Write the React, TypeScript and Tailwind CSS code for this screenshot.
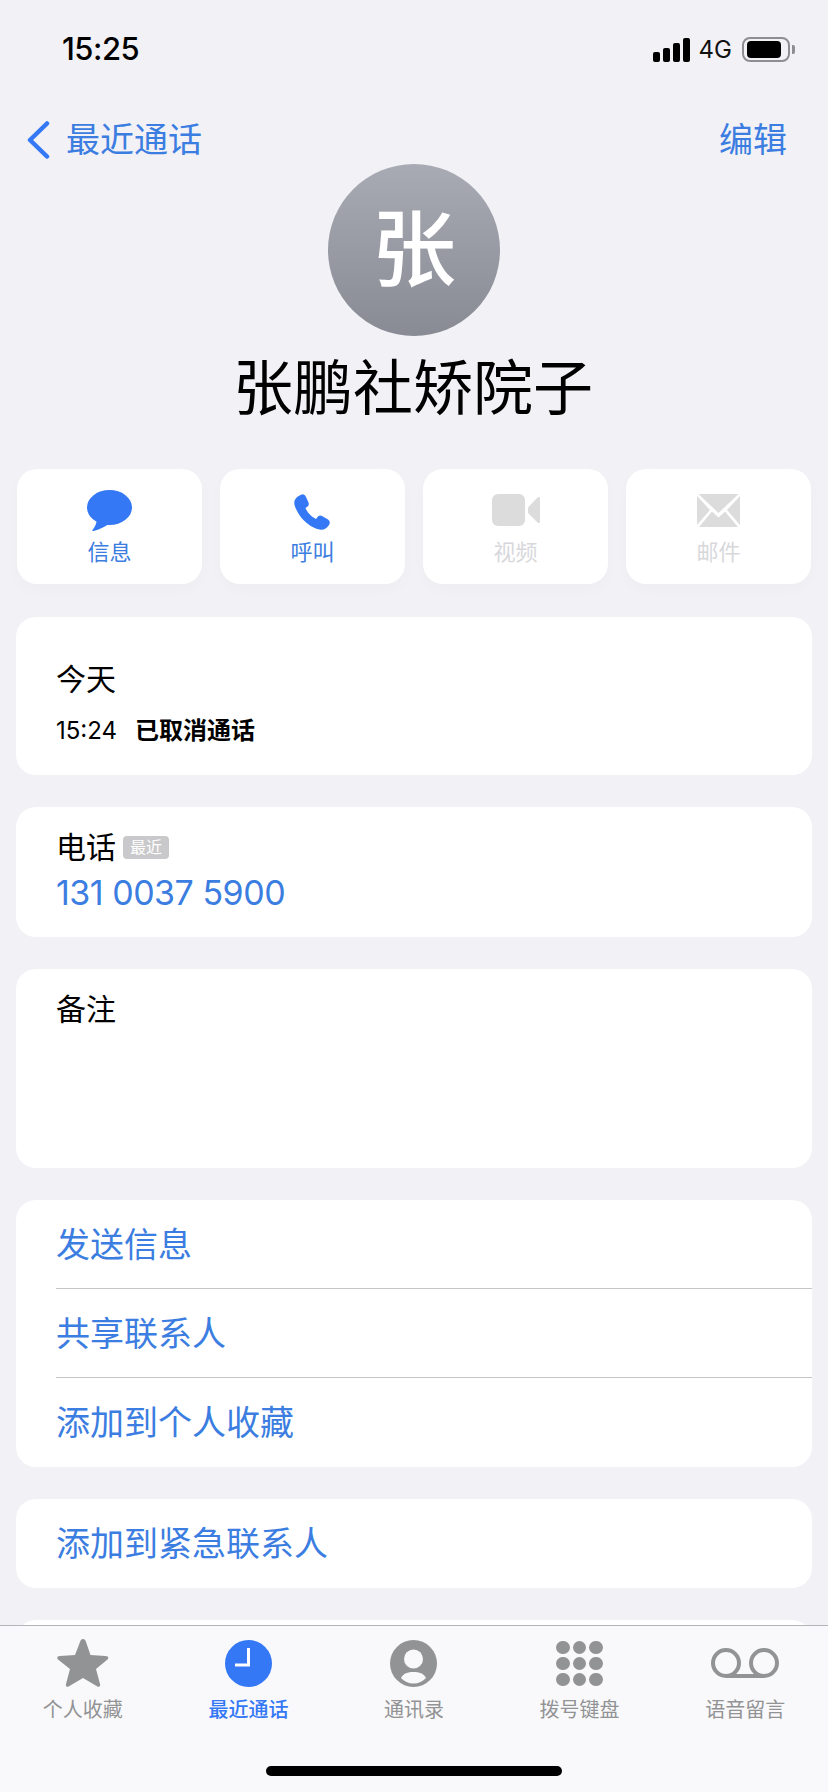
const BLUE_TEXT = 'text-[#3b7de0]';

const StatusBar = () => (
  <div className="flex h-[120px] items-start justify-between pl-[62px] pr-[33px] pt-[30px]">
    <span className="text-[31px] leading-[38px] font-medium tracking-[-0.5px] text-black">15:25</span>
    <div className="mt-[7px] flex items-center">
      <div className="flex h-[24px] items-end gap-[3px]">
        <span className="h-[10px] w-[7px] rounded-[2px] bg-black" />
        <span className="h-[14px] w-[7px] rounded-[2px] bg-black" />
        <span className="h-[19px] w-[7px] rounded-[2px] bg-black" />
        <span className="h-[24px] w-[7px] rounded-[2px] bg-black" />
      </div>
      <span className="ml-[9px] text-[24px] leading-[24px] text-[#111]">4G</span>
      <div className="ml-[10px] flex h-[25px] w-[48px] items-center rounded-[8px] border-2 border-[#8e8e93] pl-[3px]">
        <span className="h-[17px] w-[34px] rounded-[4px] bg-black" />
      </div>
      <span className="ml-[2px] h-[9px] w-[3px] rounded-r-[2px] bg-[#8e8e93]" />
    </div>
  </div>
);

const NavBar = () => (
  <div className={`flex h-[44px] items-start justify-between pl-[26px] pr-[41px] ${BLUE_TEXT}`}>
    <div className="flex h-[40px] items-center gap-[16px]">
      <svg width="24" height="38" viewBox="0 0 24 38" fill="none">
        <path d="M21 2.500 4 19l17 16.500" stroke="#3478f6" strokeWidth="4.500" strokeLinecap="round" strokeLinejoin="round" />
      </svg>
      <span className="text-[34px] leading-[40px]">最近通话</span>
    </div>
    <span className="text-[34px] leading-[40px]">编辑</span>
  </div>
);

const MessageIcon = () => (
  <svg width="45" height="41" viewBox="0 0 45 41" fill="#3478f6">
    <ellipse cx="22.500" cy="17.500" rx="22.500" ry="17.500" />
    <path d="M10 28c0 5-2 9-4.500 12-.5.800 0 1.300 1 1 6-1.500 11-4 15-7z" />
  </svg>
);

const PhoneIcon = () => (
  <svg width="36" height="36" viewBox="0 0 36 36" fill="#3478f6" className="-ml-[2px] mt-[3px]">
    <path d="M8 .5C9.500 0 11 1 12 3l2.500 5.500c.5 1.500.3 3-1 4L11.500 14c1.500 4 6 9 10.500 11l2-2.500c1-1 2.500-1.500 4-.5l6 3.500c2 1.500 2.300 3.500 1 5.500-2 3-5 5-8 4.800-7-.8-14-5.800-19-11.300C3.500 19 0 12 .3 8 .6 5 4 1.500 8 .5z" />
  </svg>
);

const VideoIcon = () => (
  <svg width="48" height="32" viewBox="0 0 48 32" fill="#dcdcdc">
    <rect x="0" y="0" width="33" height="32" rx="6" />
    <path d="M36 13.500 45.500 3.500c1-1 2.500-.5 2.500 1v23c0 1.500-1.500 2-2.500 1L36 19z" />
  </svg>
);

const MailIcon = () => (
  <svg width="43" height="33" viewBox="0 0 43 33" fill="#dcdcdc">
    <path d="M1.500 0h40L21.500 19z" />
    <path d="M0 2v29l13-15z" />
    <path d="M43 2v29L30 16z" />
    <path d="M2 33h39L28 17.500l-6.500 6-6.500-6z" />
  </svg>
);

const actions = [
  { label: '信息', icon: <MessageIcon />, color: BLUE_TEXT },
  { label: '呼叫', icon: <PhoneIcon />, color: BLUE_TEXT },
  { label: '视频', icon: <VideoIcon />, color: 'text-[#d8d8dc]' },
  { label: '邮件', icon: <MailIcon />, color: 'text-[#d8d8dc]' },
];

const Card = ({ className, children }: { className: string; children?: React.ReactNode }) => (
  <div className={`rounded-[20px] bg-white ${className}`}>{children}</div>
);

const StarIcon = () => (
  <svg width="52" height="50" viewBox="0 0 52 50" fill="#929394">
    <path d="M26 1c1.500 0 2.500 1 3 3l4.500 13 15 1c3 .2 3.500 2 2 3.500L39 31l4 15c.6 2.500-1 3.600-3 2.300L26 40l-14 8.300c-2 1.300-3.600.2-3-2.300l4-15L1 21.500C-.5 20 0 18.200 3 18l15-1 5-13c.5-2 1.500-3 3-3z" />
  </svg>
);

const ClockIcon = () => (
  <svg width="47" height="47" viewBox="0 0 47 47">
    <circle cx="23.500" cy="23.500" r="23.500" fill="#3478f6" />
    <path d="M23.500 8v17H10" fill="none" stroke="#fff" strokeWidth="3" />
  </svg>
);

const PersonIcon = () => (
  <svg width="47" height="47" viewBox="0 0 47 47">
    <circle cx="23.500" cy="23.500" r="23.500" fill="#929394" />
    <circle cx="23.500" cy="19" r="9.500" fill="#f9f9fb" />
    <path d="M11 38c2-4.500 7-6 12.500-6S34 33.500 36 38c-3 3.500-7.500 5.500-12.500 5.500S14 41.500 11 38z" fill="#f9f9fb" />
  </svg>
);

const KeypadIcon = () => (
  <div className="grid w-[47px] grid-cols-3 gap-[3px]">
    {[0, 1, 2, 3, 4, 5, 6, 7, 8].map((i) => (
      <span key={i} className="h-[13px] w-[13.600px] rounded-full bg-[#929394]" />
    ))}
  </div>
);

const VoicemailIcon = () => (
  <svg width="68" height="32" viewBox="0 0 68 32" fill="none" stroke="#929394" strokeWidth="4">
    <circle cx="15" cy="16" r="13" />
    <circle cx="53" cy="16" r="13" />
    <path d="M15 29h38" />
  </svg>
);

const tabs = [
  { label: '个人收藏', icon: <StarIcon />, color: 'text-[#929394]' },
  { label: '最近通话', icon: <ClockIcon />, color: 'text-[#3478f6] font-medium' },
  { label: '通讯录', icon: <PersonIcon />, color: 'text-[#929394]' },
  { label: '拨号键盘', icon: <KeypadIcon />, color: 'text-[#929394]' },
  { label: '语音留言', icon: <VoicemailIcon />, color: 'text-[#929394]' },
];

const TabBar = () => (
  <div className="absolute inset-x-0 bottom-0 h-[167px] border-t border-[#b4b4b8] bg-[#f9f9fb]">
    <div className="grid grid-cols-5 pt-[12px]">
      {tabs.map((t) => (
        <div key={t.label} className="flex flex-col items-center">
          <div className="flex h-[50px] items-center justify-center">{t.icon}</div>
          <span className={`mt-[9px] text-[20px] leading-[26px] ${t.color}`}>{t.label}</span>
        </div>
      ))}
    </div>
    <div className="absolute bottom-[16px] left-[266px] h-[10px] w-[296px] rounded-full bg-black" />
  </div>
);

export default function App() {
  return (
    <div className="relative h-[1792px] w-[828px] overflow-hidden bg-[#f1f1f6] font-['Inter','Noto_Sans_CJK_SC',sans-serif]">
      <StatusBar />
      <NavBar />

      <div className="flex flex-col items-center">
        <div className="flex h-[172px] w-[172px] items-center justify-center rounded-full bg-gradient-to-b from-[#a9abb4] to-[#888a94] text-[84px] leading-none font-medium text-white">
          张
        </div>
        <h1 className="mt-[16px] -ml-[2px] text-[60px] leading-[72px] font-normal text-black">张鹏社矫院子</h1>
      </div>

      <div className="mx-[17px] mt-[45px] grid grid-cols-4 gap-[18px]">
        {actions.map((a) => (
          <div
            key={a.label}
            className="flex h-[115px] flex-col items-center rounded-[20px] bg-white pt-[19px] shadow-[0_6px_16px_rgba(0,0,0,0.02)]"
          >
            <div className="flex h-[44px] items-center justify-center">{a.icon}</div>
            <span className={`mt-[6px] text-[22px] leading-[28px] ${a.color}`}>{a.label}</span>
          </div>
        ))}
      </div>

      <div className="mx-[16px] mt-[33px] flex flex-col gap-[32px]">
        <Card className="h-[158px] pl-[40px] pt-[44px]">
          <div className="text-[30px] leading-[36px] text-black">今天</div>
          <div className="mt-[18px] flex items-center gap-[18px] text-black">
            <span className="text-[24px] leading-[32px]">15:24</span>
            <span className="text-[24px] leading-[32px] font-bold">已取消通话</span>
          </div>
        </Card>

        <Card className="h-[130px] pl-[40px] pt-[22px]">
          <div className="flex items-center gap-[7px]">
            <span className="text-[30px] leading-[36px] text-black">电话</span>
            <span className="rounded-[4px] bg-[#c9c9cb] px-[7px] text-[16px] leading-[23px] text-white">最近</span>
          </div>
          <div className={`mt-[6px] text-[34px] leading-[44px] tracking-[-0.5px] ${BLUE_TEXT}`}>131 0037 5900</div>
        </Card>

        <Card className="h-[199px] pl-[40px] pt-[22px]">
          <div className="text-[30px] leading-[36px] text-black">备注</div>
        </Card>

        <Card className="h-[267px] pl-[40px]">
          <div className={`flex h-[89px] items-center border-b border-[#c6c6c8] text-[34px] ${BLUE_TEXT}`}>发送信息</div>
          <div className={`flex h-[89px] items-center border-b border-[#c6c6c8] text-[34px] ${BLUE_TEXT}`}>共享联系人</div>
          <div className={`flex h-[89px] items-center text-[34px] ${BLUE_TEXT}`}>添加到个人收藏</div>
        </Card>

        <Card className={`flex h-[89px] items-center pl-[40px] text-[34px] ${BLUE_TEXT}`}>添加到紧急联系人</Card>

        <Card className="h-[89px]" />
      </div>

      <TabBar />
    </div>
  );
}
